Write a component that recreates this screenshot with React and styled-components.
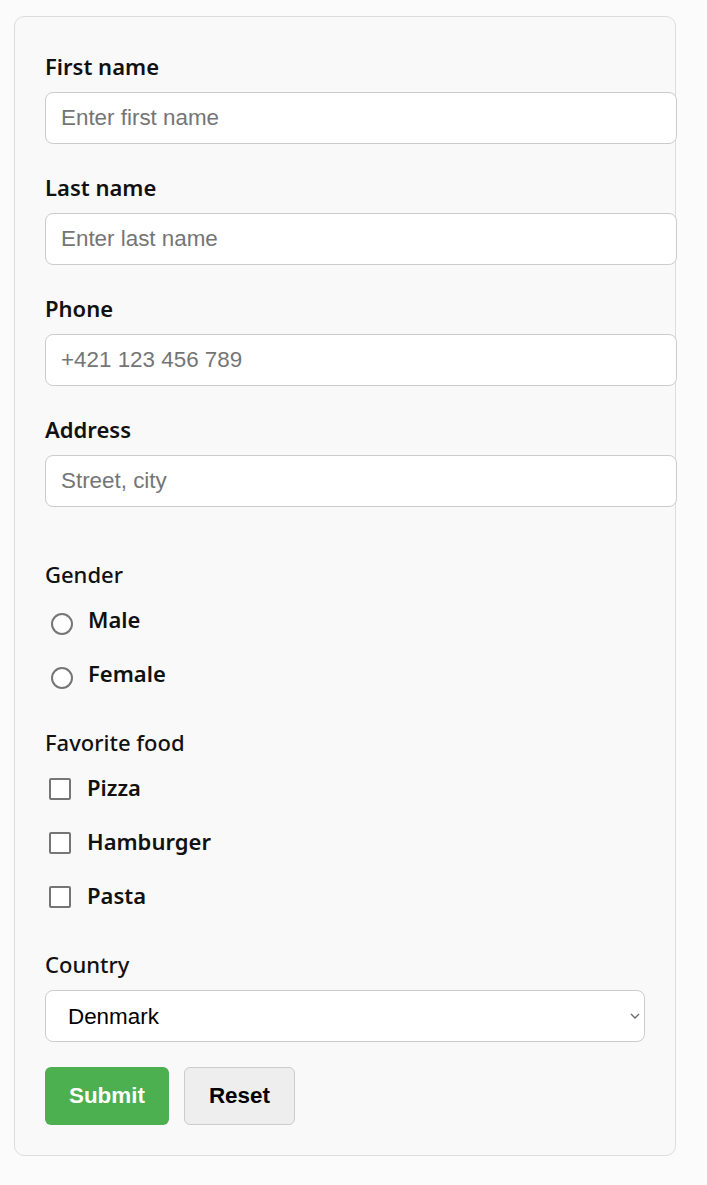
import React, { useState } from "react";
import styled, { createGlobalStyle } from "styled-components";

const GlobalStyle = createGlobalStyle`
  html, body {
    margin: 0;
    background: #fbfbfb;
  }
  * {
    -webkit-font-smoothing: antialiased;
  }
`;

const App = () => {
  const [country, setCountry] = useState("Denmark");

  return (
    <Page>
      <GlobalStyle />
      <Card onSubmit={(event) => event.preventDefault()}>
        <FieldList>
          <Field>
            <Label htmlFor="first">First name</Label>
            <Input id="first" placeholder="Enter first name" />
          </Field>
          <Field>
            <Label htmlFor="last">Last name</Label>
            <Input id="last" placeholder="Enter last name" />
          </Field>
          <Field>
            <Label htmlFor="phone">Phone</Label>
            <Input id="phone" placeholder="+421 123 456 789" />
          </Field>
          <Field>
            <Label htmlFor="address">Address</Label>
            <Input id="address" placeholder="Street, city" />
          </Field>
        </FieldList>

        <Group>
          <GroupTitle>Gender</GroupTitle>
          <Option>
            <Radio type="radio" name="gender" value="male" />
            <OptionText>Male</OptionText>
          </Option>
          <Option>
            <Radio type="radio" name="gender" value="female" />
            <OptionText>Female</OptionText>
          </Option>
        </Group>

        <Group>
          <GroupTitle>Favorite food</GroupTitle>
          <Option>
            <Checkbox type="checkbox" value="pizza" />
            <OptionText $checkbox>Pizza</OptionText>
          </Option>
          <Option>
            <Checkbox type="checkbox" value="hamburger" />
            <OptionText $checkbox>Hamburger</OptionText>
          </Option>
          <Option>
            <Checkbox type="checkbox" value="pasta" />
            <OptionText $checkbox>Pasta</OptionText>
          </Option>
        </Group>

        <CountryTitle htmlFor="country">Country</CountryTitle>
        <SelectWrap>
          <Select id="country" value={country} onChange={(event) => setCountry(event.target.value)}>
            <option>Denmark</option>
            <option>Slovakia</option>
            <option>Germany</option>
            <option>Norway</option>
          </Select>
          <Chevron width="10" height="6" viewBox="0 0 10 6">
            <path d="M1 1l4 4 4-4" fill="none" stroke="#6b6b6b" strokeWidth="1.4" />
          </Chevron>
        </SelectWrap>

        <Actions>
          <Button type="submit" $primary>Submit</Button>
          <Button type="reset">Reset</Button>
        </Actions>
      </Card>
    </Page>
  );
};

export default App;

const Page = styled.div`
  padding: 16px 0 28px 14px;
`;

const Card = styled.form`
  width: 662px;
  box-sizing: border-box;
  padding: 32px 30px 30px;
  background: #f9f9f9;
  border: 1px solid #dddddd;
  border-radius: 10px;
  font-family: "Noto Sans", "Open Sans", sans-serif;
  color: #111;
`;

const FieldList = styled.div`
  display: flex;
  flex-direction: column;
  gap: 26px;
  margin-bottom: 52px;
`;

const Field = styled.div``;

const Label = styled.label`
  display: block;
  font-size: 22px;
  line-height: 30px;
  font-weight: 600;
  padding-top: 2px;
  margin-bottom: 11px;
`;

const Input = styled.input`
  display: block;
  width: 100%;
  padding: 12px 15px;
  font-family: "Liberation Sans", Arial, sans-serif;
  font-size: 22.4px;
  line-height: 26px;
  color: #111;
  background: #fff;
  border: 1px solid #cccccc;
  border-radius: 8px;
  outline: none;

  &::placeholder {
    color: #757575;
  }
`;

const Group = styled.div`
  margin-bottom: 27px;
`;

const GroupTitle = styled.div`
  font-size: 22px;
  line-height: 30px;
  font-weight: 500;
  margin-bottom: 3px;
`;

const Option = styled.label`
  display: flex;
  align-items: center;
  height: 54px;
  cursor: pointer;
`;

const Radio = styled.input`
  appearance: none;
  flex: none;
  width: 22px;
  height: 22px;
  margin: 9px 0 0 6px;
  border: 2px solid #767676;
  border-radius: 50%;
  background: #fff;
  box-sizing: border-box;

  &:checked {
    border: 6px solid #1a73e8;
  }
`;

const Checkbox = styled.input`
  appearance: none;
  flex: none;
  width: 22px;
  height: 22px;
  margin: 4px 0 0 4px;
  border: 2px solid #767676;
  border-radius: 2px;
  background: #fff;
  box-sizing: border-box;

  &:checked {
    background: #1a73e8;
    border-color: #1a73e8;
  }
`;

const OptionText = styled.span`
  font-size: 22px;
  line-height: 30px;
  font-weight: 600;
  margin-left: ${({ $checkbox }) => ($checkbox ? "16px" : "15px")};
`;

const CountryTitle = styled.label`
  display: block;
  font-size: 22px;
  line-height: 30px;
  font-weight: 500;
  margin-bottom: 11px;
`;

const SelectWrap = styled.div`
  position: relative;
`;

const Select = styled.select`
  appearance: none;
  display: block;
  width: 100%;
  height: 52px;
  box-sizing: border-box;
  padding: 0 22px;
  font-family: "Liberation Sans", Arial, sans-serif;
  font-size: 22.4px;
  color: #000;
  background: #fff;
  border: 1px solid #cccccc;
  border-radius: 8px;
  outline: none;
`;

const Chevron = styled.svg`
  position: absolute;
  right: 5px;
  top: 23px;
  pointer-events: none;
`;

const Actions = styled.div`
  display: flex;
  gap: 15px;
  margin-top: 25px;
`;

const Button = styled.button`
  height: 58px;
  padding: 0 24px;
  font-family: "Liberation Sans", Arial, sans-serif;
  font-size: 22.4px;
  font-weight: 700;
  border-radius: 6px;
  cursor: pointer;
  color: ${({ $primary }) => ($primary ? "#fff" : "#000")};
  background: ${({ $primary }) => ($primary ? "#4caf50" : "#eeeeee")};
  border: ${({ $primary }) => ($primary ? "none" : "1px solid #cccccc")};
`;
